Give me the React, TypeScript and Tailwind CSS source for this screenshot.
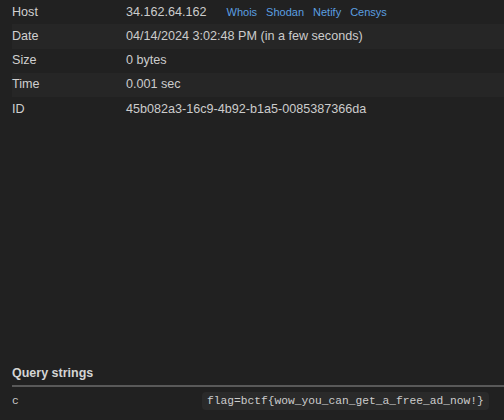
import React from "react";

const rows: { label: string; value: React.ReactNode; striped: boolean }[] = [
  {
    label: "Host",
    value: (
      <div className="flex items-baseline">
        <span>34.162.64.162</span>
        <span className="ml-[20px] flex gap-[9px] text-[11px] text-[#5b9fe0]">
          <a>Whois</a>
          <a>Shodan</a>
          <a>Netify</a>
          <a>Censys</a>
        </span>
      </div>
    ),
    striped: false,
  },
  { label: "Date", value: "04/14/2024 3:02:48 PM (in a few seconds)", striped: true },
  { label: "Size", value: "0 bytes", striped: false },
  { label: "Time", value: "0.001 sec", striped: true },
  { label: "ID", value: "45b082a3-16c9-4b92-b1a5-0085387366da", striped: false },
];

export default function App() {
  return (
    <div
      className="flex h-[420px] w-[504px] flex-col overflow-hidden bg-[#212121] pl-3 text-[#d0d0d0]"
      style={{ fontFamily: '"Liberation Sans", Arial, sans-serif' }}
    >
      <div className="flex flex-col text-[12.6px]">
        {rows.map((r) => (
          <div
            key={r.label}
            className={`flex h-[24.25px] items-center ${r.striped ? "bg-[#262626]" : ""}`}
          >
            <div className="w-[114px] shrink-0">{r.label}</div>
            <div className="text-[#cccccc]">{r.value}</div>
          </div>
        ))}
      </div>
      <div className="flex-1" />
      <div className="border-b-2 border-[#595959] pb-[3px] text-[12.5px] font-bold leading-[18px] text-[#d4d4d4]">
        Query strings
      </div>
      <div className="flex h-[33px] items-start pt-[5px]">
        <div
          className="flex h-[18px] w-[190px] shrink-0 items-center text-[11.25px] text-[#cccccc]"
          style={{ fontFamily: '"Liberation Mono", monospace' }}
        >
          c
        </div>
        <div
          className="flex h-[18px] items-center rounded-[4px] bg-[#2a2a2a] px-[5px] text-[11.25px] text-[#cccccc]"
          style={{ fontFamily: '"Liberation Mono", monospace' }}
        >
          flag=bctf{"{"}wow_you_can_get_a_free_ad_now!{"}"}
        </div>
      </div>
    </div>
  );
}
